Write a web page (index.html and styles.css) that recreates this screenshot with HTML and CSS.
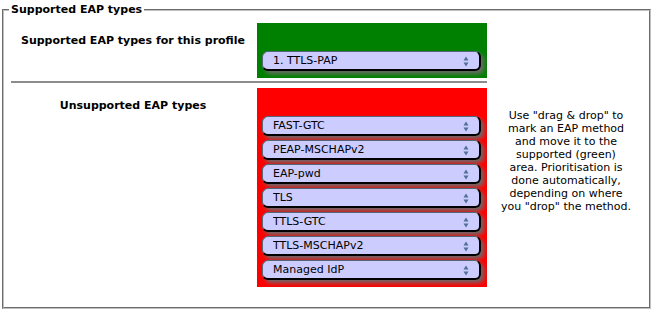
FILE: index.html
```html
<!DOCTYPE html>
<html>
<head>
<meta charset="utf-8">
<link rel="stylesheet" href="styles.css">
</head>
<body>
<fieldset class="eap-fieldset">
  <legend class="eap-legend">Supported EAP types</legend>
  <div class="eap-grid">
    <div class="eap-label">Supported EAP types for this profile</div>
    <div class="eap-box eap-box--supported">
      <div class="sel-wrap">
        <select class="eap-select"><option>1. TTLS-PAP</option></select>
        <svg class="sel-arrows" width="6" height="11" viewBox="0 0 6 11"><path d="M0.5 4.5 L3 0.5 L5.5 4.5 Z M0.5 6.5 L5.5 6.5 L3 10.5 Z" fill="#4f6f99"/></svg>
      </div>
    </div>
    <div></div>
    <div class="eap-sep"></div>
    <div></div>
    <div class="eap-label">Unsupported EAP types</div>
    <div class="eap-box eap-box--unsupported">
      <div class="sel-wrap">
        <select class="eap-select"><option>FAST-GTC</option></select>
        <svg class="sel-arrows" width="6" height="11" viewBox="0 0 6 11"><path d="M0.5 4.5 L3 0.5 L5.5 4.5 Z M0.5 6.5 L5.5 6.5 L3 10.5 Z" fill="#4f6f99"/></svg>
      </div>
      <div class="sel-wrap">
        <select class="eap-select"><option>PEAP-MSCHAPv2</option></select>
        <svg class="sel-arrows" width="6" height="11" viewBox="0 0 6 11"><path d="M0.5 4.5 L3 0.5 L5.5 4.5 Z M0.5 6.5 L5.5 6.5 L3 10.5 Z" fill="#4f6f99"/></svg>
      </div>
      <div class="sel-wrap">
        <select class="eap-select"><option>EAP-pwd</option></select>
        <svg class="sel-arrows" width="6" height="11" viewBox="0 0 6 11"><path d="M0.5 4.5 L3 0.5 L5.5 4.5 Z M0.5 6.5 L5.5 6.5 L3 10.5 Z" fill="#4f6f99"/></svg>
      </div>
      <div class="sel-wrap">
        <select class="eap-select"><option>TLS</option></select>
        <svg class="sel-arrows" width="6" height="11" viewBox="0 0 6 11"><path d="M0.5 4.5 L3 0.5 L5.5 4.5 Z M0.5 6.5 L5.5 6.5 L3 10.5 Z" fill="#4f6f99"/></svg>
      </div>
      <div class="sel-wrap">
        <select class="eap-select"><option>TTLS-GTC</option></select>
        <svg class="sel-arrows" width="6" height="11" viewBox="0 0 6 11"><path d="M0.5 4.5 L3 0.5 L5.5 4.5 Z M0.5 6.5 L5.5 6.5 L3 10.5 Z" fill="#4f6f99"/></svg>
      </div>
      <div class="sel-wrap">
        <select class="eap-select"><option>TTLS-MSCHAPv2</option></select>
        <svg class="sel-arrows" width="6" height="11" viewBox="0 0 6 11"><path d="M0.5 4.5 L3 0.5 L5.5 4.5 Z M0.5 6.5 L5.5 6.5 L3 10.5 Z" fill="#4f6f99"/></svg>
      </div>
      <div class="sel-wrap">
        <select class="eap-select"><option>Managed IdP</option></select>
        <svg class="sel-arrows" width="6" height="11" viewBox="0 0 6 11"><path d="M0.5 4.5 L3 0.5 L5.5 4.5 Z M0.5 6.5 L5.5 6.5 L3 10.5 Z" fill="#4f6f99"/></svg>
      </div>
    </div>
    <div class="eap-help">Use "drag &amp; drop" to mark an EAP method and move it to the supported (green) area. Prioritisation is done automatically, depending on where you "drop" the method.</div>
  </div>
</fieldset>
</body>
</html>
```

FILE: styles.css
```css
html, body {
  margin: 0;
  padding: 0;
  background: #ffffff;
}
body {
  font-family: "DejaVu Sans", Verdana, sans-serif;
  font-size: 11px;
  color: #000;
}
.eap-fieldset {
  margin: 3px 2px 0 2px;
  padding: 7px 6px 20px 7px;
  border: 2px groove #c0c0c0;
  min-width: 0;
}
.eap-legend {
  font-weight: bold;
  font-size: 11px;
  padding: 0 2px;
  margin-left: -2px;
}
.eap-grid {
  display: grid;
  grid-template-columns: 244px 230px 1fr;
  column-gap: 2px;
}
.eap-label {
  font-weight: bold;
  text-align: center;
  padding-top: 11px;
}
.eap-box {
  display: flex;
  flex-direction: column;
  gap: 4px;
  padding: 28px 6px 7px 5px;
}
.eap-box--supported {
  background: #008000;
}
.eap-box--unsupported {
  background: #ff0000;
}
.eap-sep {
  grid-column: 1 / 3;
  height: 2px;
  background: #8c8c8c;
  margin: 3px 0 5px 0;
}
.sel-wrap {
  position: relative;
  height: 20px;
}
.eap-select {
  -webkit-appearance: none;
  appearance: none;
  display: block;
  width: 100%;
  height: 20px;
  box-sizing: border-box;
  margin: 0;
  padding: 0 0 0 10px;
  font-family: "DejaVu Sans", Verdana, sans-serif;
  font-size: 11px;
  color: #000;
  background: #ccccff;
  border-style: solid;
  border-width: 1px 2px 2px 1px;
  border-color: #556677 #000 #000 #556677;
  border-radius: 6px;
  box-shadow: 3px 3px 4px #6a6a6a;
  outline: none;
}
.sel-arrows {
  position: absolute;
  right: 12px;
  top: 5px;
  pointer-events: none;
}
.eap-help {
  text-align: center;
  padding: 21px 12px 0 12px;
}
```
